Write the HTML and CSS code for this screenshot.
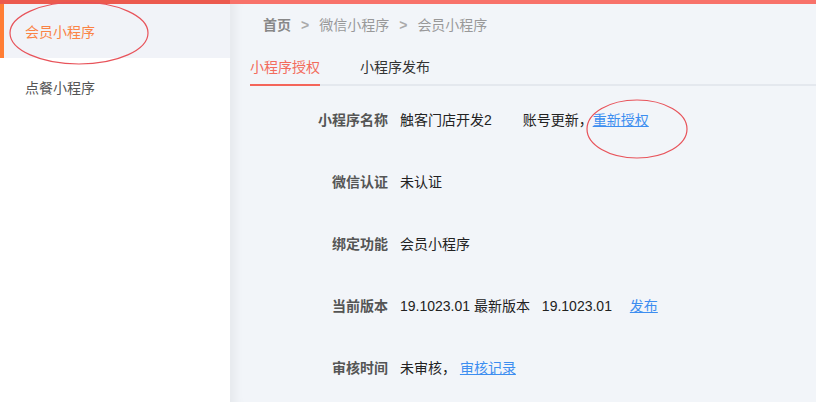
FILE: index.html
```html
<!DOCTYPE html>
<html lang="zh-CN">
<head>
    <meta charset="UTF-8">
    <title>会员小程序</title>
    <link rel="stylesheet" href="styles.css">
</head>
<body>
    <div class="top-bar"></div>
    <div class="layout">
        <div class="sidebar">
            <div class="menu-item active">会员小程序</div>
            <div class="menu-item">点餐小程序</div>
        </div>

        <div class="main">
            <div class="breadcrumb">
                <span class="crumb-home">首页</span>
                <span class="sep">&gt;</span>
                <span>微信小程序</span>
                <span class="sep">&gt;</span>
                <span>会员小程序</span>
            </div>

            <div class="tabs">
                <div class="tab active">小程序授权</div>
                <div class="tab">小程序发布</div>
            </div>

            <div class="info">
                <div class="info-row">
                    <div class="label">小程序名称</div>
                    <div class="value">
                        <span class="name">触客门店开发2</span>
                        <span>账号更新，</span><a href="#" class="link">重新授权</a>
                    </div>
                </div>
                <div class="info-row">
                    <div class="label">微信认证</div>
                    <div class="value">未认证</div>
                </div>
                <div class="info-row">
                    <div class="label">绑定功能</div>
                    <div class="value">会员小程序</div>
                </div>
                <div class="info-row">
                    <div class="label">当前版本</div>
                    <div class="value">
                        <span>19.1023.01 最新版本</span>
                        <span class="version">19.1023.01</span>
                        <a href="#" class="link publish">发布</a>
                    </div>
                </div>
                <div class="info-row">
                    <div class="label">审核时间</div>
                    <div class="value">
                        <span>未审核，</span>
                        <a href="#" class="link">审核记录</a>
                    </div>
                </div>
            </div>
        </div>
    </div>

    <!-- hand-drawn annotation circles -->
    <svg class="marks" width="816" height="402" viewBox="0 0 816 402">
        <ellipse cx="79" cy="33" rx="69" ry="31" />
        <ellipse cx="637" cy="129" rx="50" ry="29" />
    </svg>
</body>
</html>
```

FILE: styles.css
```css
* {
    box-sizing: border-box;
    margin: 0;
    padding: 0;
}

body {
    font-family: "Liberation Sans", "Noto Sans CJK SC", sans-serif;
    font-size: 14px;
    color: #333;
    background-color: #f2f5f9;
    width: 816px;
    height: 402px;
    overflow: hidden;
    position: relative;
}

.top-bar {
    height: 4px;
    background: linear-gradient(to right, #ec5a4e 0, #ec5a4e 230px, #f8726a 230px);
}

.layout {
    display: flex;
    height: 398px;
}

.sidebar {
    width: 230px;
    background-color: white;
    flex-shrink: 0;
}

.menu-item {
    height: 56px;
    line-height: 60px;
    padding-left: 21px;
    color: #555;
    border-left: 4px solid transparent;
}

.menu-item:first-child {
    height: 54px;
    line-height: 56px;
}

.menu-item.active {
    background-color: #f1f3f8;
    border-left-color: #ff7d34;
    color: #fa8446;
}

.main {
    flex: 1;
    background-color: #f2f5f9;
    box-shadow: inset 14px 0 12px -10px rgba(0, 0, 0, 0.06);
    padding-left: 20px;
}

.breadcrumb {
    display: flex;
    gap: 10px;
    color: #999;
    padding-left: 13px;
    height: 42px;
    line-height: 42px;
}

.crumb-home {
    color: #888;
    font-weight: bold;
}

.sep {
    font-weight: bold;
    color: #aaa;
}

.tabs {
    display: flex;
    border-bottom: 2px solid #e4e8ee;
    height: 40px;
}

.tab {
    line-height: 42px;
    color: #333;
    padding-right: 40px;
}

.tab.active {
    color: #f36c5c;
    padding-right: 0;
    width: 70px;
    margin-right: 40px;
    border-bottom: 2px solid #f4655a;
    margin-bottom: -2px;
}

.info {
    padding-top: 3px;
}

.info-row {
    display: flex;
    height: 62px;
    line-height: 62px;
    margin-left: -20px;
}

.label {
    width: 158px;
    text-align: right;
    font-weight: bold;
    color: #555;
    margin-right: 12px;
}

.value {
    color: #222;
}

.name {
    margin-right: 27px;
}

.version {
    margin-left: 8px;
}

.link {
    color: #3d8ef0;
    text-decoration: underline;
}

.publish {
    margin-left: 14px;
}

.marks {
    position: absolute;
    top: 0;
    left: 0;
    pointer-events: none;
}

.marks ellipse {
    fill: none;
    stroke: #e8535a;
    stroke-width: 1.2;
}
```
